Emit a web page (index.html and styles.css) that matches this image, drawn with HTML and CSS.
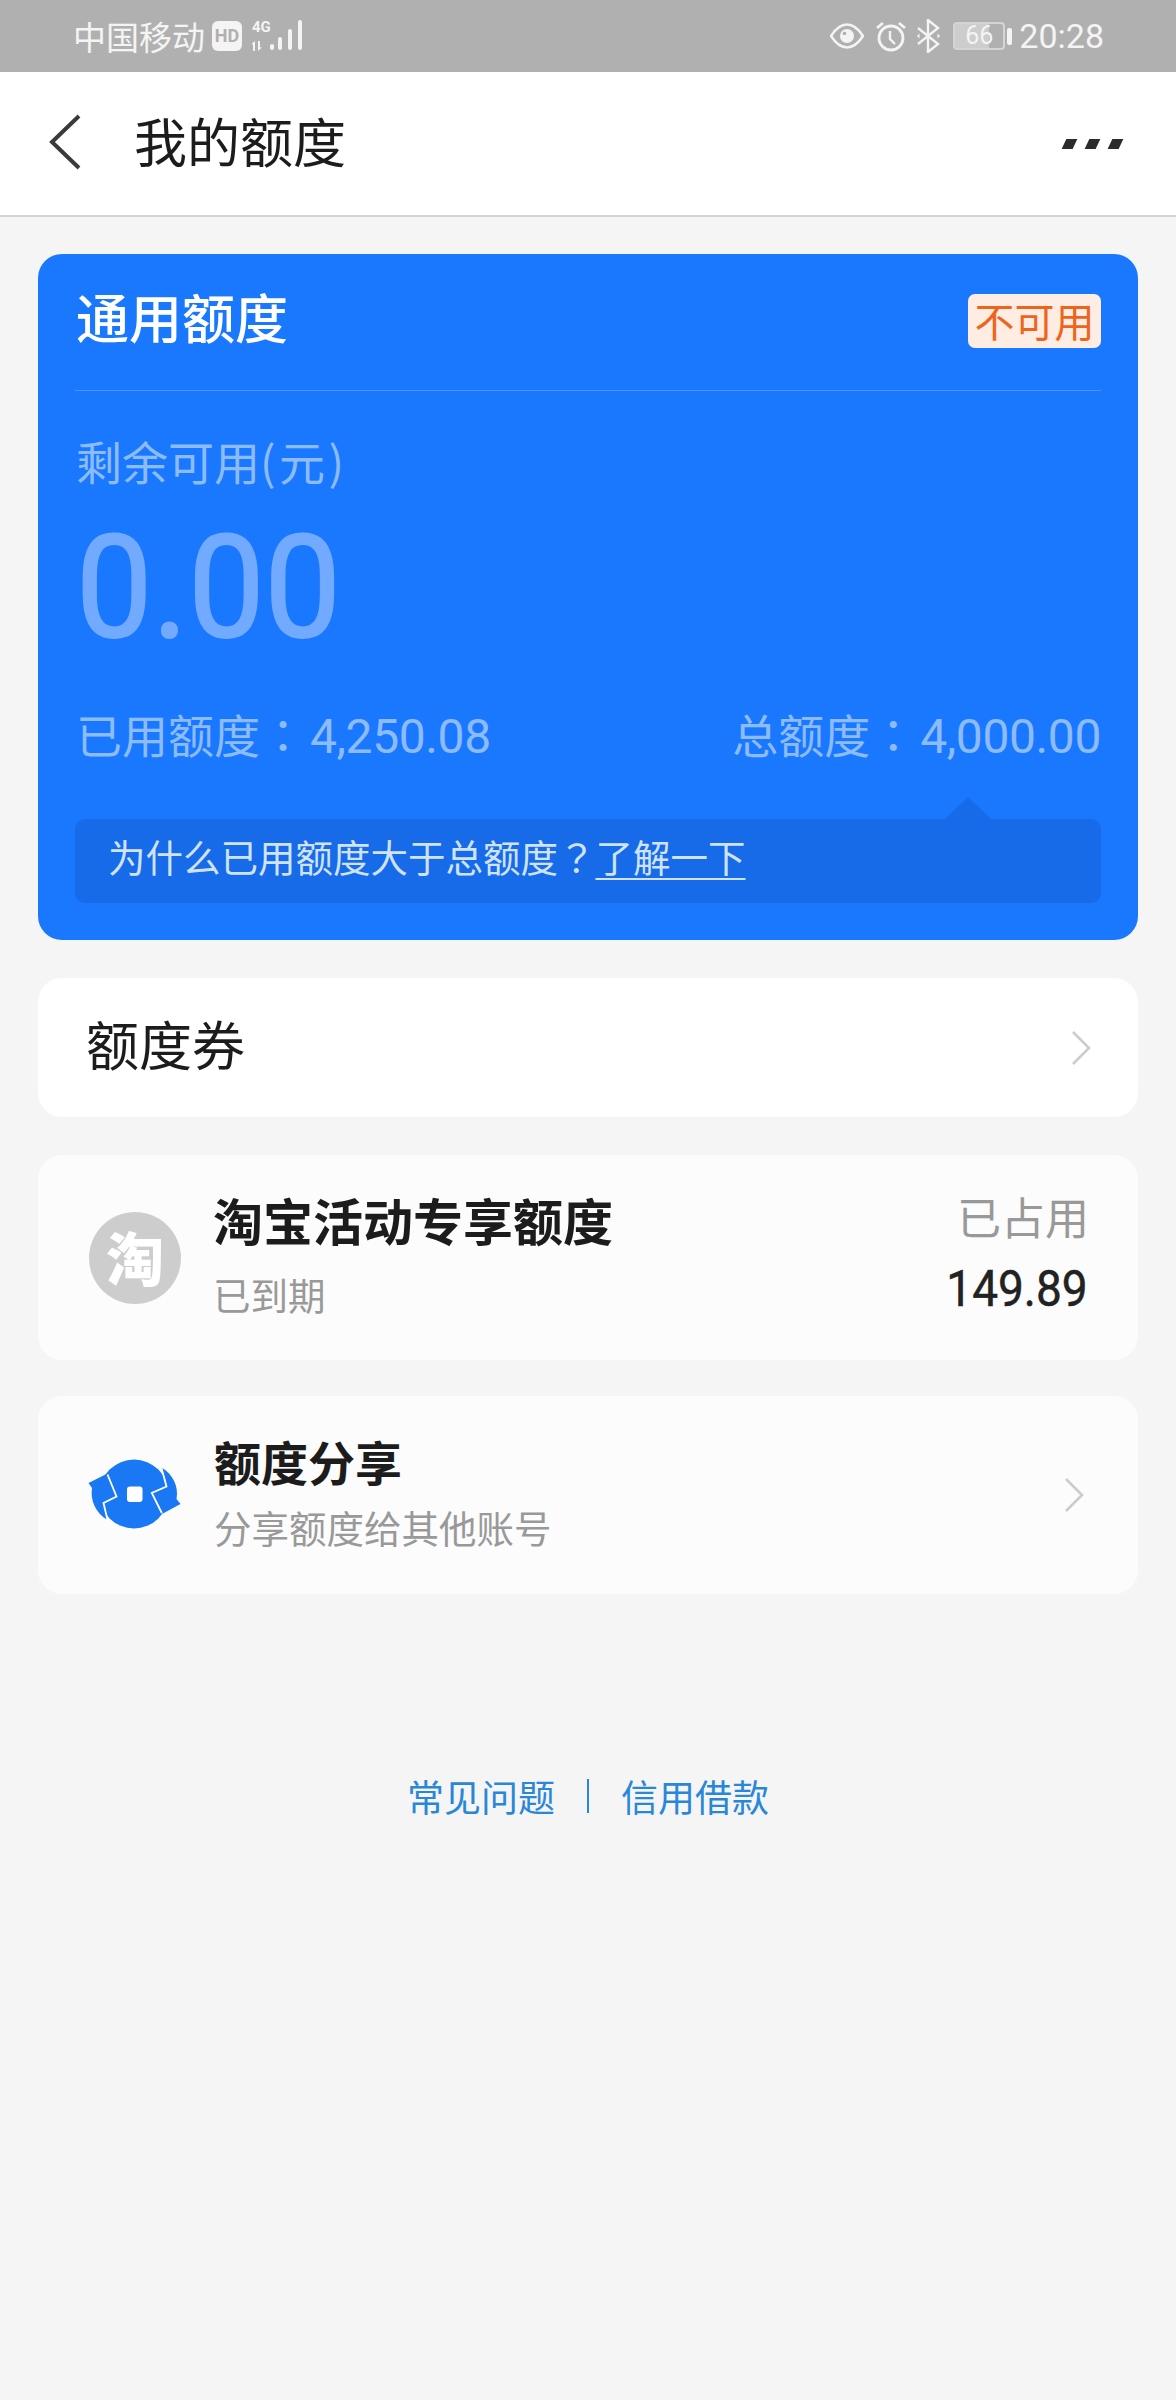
FILE: index.html
```html
<!DOCTYPE html>
<html lang="zh-CN">
<head>
  <meta charset="UTF-8">
  <title>我的额度</title>
  <link rel="stylesheet" href="styles.css">
</head>
<body>

  <!-- Status bar -->
  <div class="status">
    <div class="status-left">
      <span class="carrier">中国移动</span>
      <span class="hd">HD</span>
      <span class="net">
        <span class="net-g">4G</span>
        <svg width="14" height="10" viewBox="0 0 14 10">
          <path d="M0 2.500L3 0v10H1V3.500H0zM6 0h2v6.500h2L6 10z"/>
        </svg>
      </span>
      <svg class="signal" width="34" height="32" viewBox="0 0 34 32">
        <rect x="1" y="24" width="4" height="6" rx="2"/>
        <rect x="9" y="17" width="4" height="13" rx="2"/>
        <rect x="19" y="9" width="4" height="21" rx="2"/>
        <rect x="29" y="0" width="4" height="30" rx="2"/>
      </svg>
    </div>
    <div class="status-right">
      <svg class="ic-eye" width="34" height="26" viewBox="0 0 34 26">
        <path d="M1 13C6 5 11 1.500 17 1.500S28 5 33 13c-5 8-10 11.500-16 11.500S6 21 1 13z" fill="none" stroke="#f4f4f4" stroke-width="2.600"/>
        <circle cx="17" cy="13" r="7"/>
        <circle cx="14.500" cy="10.500" r="1.800" fill="#b0b0b0"/>
      </svg>
      <svg class="ic-alarm" width="32" height="32" viewBox="0 0 32 32">
        <circle cx="16" cy="18" r="12" fill="none" stroke="#f4f4f4" stroke-width="2.800"/>
        <path d="M15 11v8l5 5" fill="none" stroke="#f4f4f4" stroke-width="2.400"/>
        <path d="M2 8l6-5M30 8l-6-5" fill="none" stroke="#f4f4f4" stroke-width="2.800"/>
      </svg>
      <svg class="ic-bt" width="26" height="34" viewBox="0 0 26 34">
        <path d="M3 9l20 16-10 8V1l10 8L3 25" fill="none" stroke="#f4f4f4" stroke-width="2.400"/>
        <path d="M2 17l2.500-2.500v5zM25 17l-2.500-2.500v5z"/>
      </svg>
      <span class="battery"><span class="battery-fill"></span><span class="battery-num">66</span></span>
      <span class="battery-tip"></span>
      <span class="clock">20:28</span>
    </div>
  </div>

  <!-- Title bar -->
  <div class="topbar">
    <svg class="back" width="34" height="56" viewBox="0 0 34 56">
      <path d="M31 2L4 28l27 26" fill="none" stroke="#3a3a3a" stroke-width="4"/>
    </svg>
    <h1 class="page-title">我的额度</h1>
    <div class="more"><i></i><i></i><i></i></div>
  </div>

  <div class="content">

    <!-- Main quota card -->
    <div class="quota">
      <div class="quota-head">
        <span class="quota-title">通用额度</span>
        <span class="badge">不可用</span>
      </div>
      <div class="quota-label">剩余可用<span class="unit">(元)</span></div>
      <div class="quota-amount">0.00</div>
      <div class="quota-stats">
        <span>已用额度<span class="punct" lang="zh-TW">：</span><span class="num">4,250.08</span></span>
        <span>总额度<span class="punct" lang="zh-TW">：</span><span class="num">4,000.00</span></span>
      </div>
      <div class="tip">为什么已用额度大于总额度<span class="punct" lang="zh-TW">？</span><a class="tip-link">了解一下</a></div>
    </div>

    <!-- Coupon row -->
    <div class="card coupon">
      <span class="coupon-name">额度券</span>
      <svg class="chevron" width="22" height="36" viewBox="0 0 22 36"><path d="M3 2l16 16L3 34" fill="none" stroke="#cccccc" stroke-width="2.600"/></svg>
    </div>

    <!-- Taobao row -->
    <div class="card item taobao">
      <span class="tb-icon">淘</span>
      <div class="item-text">
        <div class="item-title">淘宝活动专享额度</div>
        <div class="item-sub">已到期</div>
      </div>
      <div class="used">
        <div class="used-label">已占用</div>
        <div class="used-num">149.89</div>
      </div>
    </div>

    <!-- Share row -->
    <div class="card item share">
      <svg class="share-icon" width="94" height="72" viewBox="0 0 94 72">
        <circle cx="46" cy="35" r="34.500" fill="#1a78f5"/>
        <path d="M.5 24L19.500 14.500 29 37l-13 7 3.500 17C8 54 2 42 4 29z" fill="#1a78f5"/>
        <path d="M92.500 45L75 54.500 64 34l15-7-5.500-18.500C85 15 91 28 88.500 40z" fill="#1a78f5"/>
        <path d="M19.500 15.500L28.500 37.500 15.500 44l4 17" fill="none" stroke="#fff" stroke-width="1.800"/>
        <path d="M73.500 9L78.500 27.500 63.800 34l10 20" fill="none" stroke="#fff" stroke-width="1.800"/>
        <rect x="39" y="27.500" width="15.500" height="15.500" rx="3" fill="#fff"/>
      </svg>
      <div class="item-text">
        <div class="item-title share-title">额度分享</div>
        <div class="item-sub share-sub">分享额度给其他账号</div>
      </div>
      <svg class="chevron" width="22" height="36" viewBox="0 0 22 36"><path d="M3 2l16 16L3 34" fill="none" stroke="#cccccc" stroke-width="2.600"/></svg>
    </div>

    <!-- Footer links -->
    <div class="links">
      <a>常见问题</a>
      <span class="links-sep"></span>
      <a>信用借款</a>
    </div>

  </div>
</body>
</html>
```

FILE: styles.css
```css
/* Reset + base */
* { margin:0; padding:0; box-sizing:border-box; }
body {
  width:1176px; height:2400px; overflow:hidden;
  background:#f5f5f5;
  font-family:"Noto Sans CJK SC", "Noto Sans", sans-serif;
}

/* Status bar */
.status {
  height:72px; background:#b0b0b0; color:#f4f4f4;
  display:flex; justify-content:space-between; align-items:center;
  padding:0 72px 0 73px;
}
.status-left, .status-right { display:flex; align-items:center; }
.status svg { fill:#f4f4f4; }
.carrier { font-size:33px; line-height:40px; }
.hd {
  width:30px; height:30px; margin-left:7px;
  background:#f4f4f4; color:#b0b0b0; border-radius:6px;
  font:bold 18px/30px "Roboto", sans-serif; text-align:center;
}
.net {
  width:19px; margin-left:10px;
  display:flex; flex-direction:column; align-items:flex-start; gap:8px;
}
.net-g { font:bold 15px/12px "Roboto", sans-serif; }
.signal { margin:0 0 0 -2px; }
.ic-eye { margin-right:11px; }
.ic-alarm { margin-right:8px; }
.ic-bt { margin-right:12px; }
.battery {
  position:relative; width:52px; height:28px;
  border:2px solid #d4d4d4; border-radius:4px;
}
.battery-fill { position:absolute; left:0; top:0; bottom:0; width:34px; background:#cdcdcd; }
.battery-num {
  position:relative; display:block; text-align:center;
  font:25px/24px "Roboto", sans-serif;
}
.battery-tip { width:5px; height:17px; margin-left:2px; background:#f4f4f4; border-radius:2px; }
.clock { font:34px/40px "Roboto", sans-serif; margin-left:7px; }

/* Title bar */
.topbar {
  height:145px; background:#fff;
  border-bottom:2px solid #d4d4d4;
  display:flex; align-items:center;
  padding:0 55px 4px 48px;
}
.back { margin-right:52px; }
.page-title { font-size:53px; line-height:60px; font-weight:400; color:#1c1c1c; flex:1; margin-bottom:4px; }
.more { display:flex; gap:12px; margin-top:4px; }
.more i { width:11px; height:10px; background:#2c2c2c; transform:skewX(-25deg); }

/* Page body */
.content { padding:37px 38px 0; }

/* Main quota card */
.quota {
  height:686px; background:#1a78ff; border-radius:24px;
  padding:0 37px;
  color:#8cbcff;
}
.quota-head {
  height:137px; border-bottom:1px solid #4f95ff;
  display:flex; justify-content:space-between;
}
.quota-title { font-size:53px; line-height:60px; font-weight:500; color:#fff; margin:32px 0 0 1px; }
.badge {
  width:133px; height:54px; margin-top:40px;
  background:#ffede4; color:#ee641c; border-radius:7px;
  font-size:40px; line-height:52px; text-align:center;
}
.quota-label { font-size:46px; line-height:52px; margin:43px 0 0 1px; }
.unit { letter-spacing:3.500px; }
/* Roboto digits are wider than the ones on the phone, so squeeze them a bit */
.quota-amount {
  font:400 143px/143px "Roboto", sans-serif;
  -webkit-text-stroke:2px #72aaff;
  color:#72aaff;
  margin:31px 0 0 1px;
  transform:scaleX(.95); transform-origin:left center;
}
.quota-stats {
  display:flex; justify-content:space-between;
  font-size:46px; line-height:52px;
  margin:47px 0 0 1px;
}
.num { font:48px/52px "Roboto", sans-serif; letter-spacing:-.4px; margin-left:4px; }
.punct { font-family:"Noto Sans CJK TC", sans-serif; }
.tip {
  position:relative;
  height:84px; margin-top:56px; padding-left:33px;
  background:#176ae8; border-radius:10px;
  font-size:37.500px; line-height:74px; color:#cfe3ff;
}
.tip::before {
  content:""; position:absolute; right:110px; top:-22px;
  border-left:23px solid transparent; border-right:23px solid transparent;
  border-bottom:22px solid #176ae8;
}
.tip-link { text-decoration:underline; text-decoration-thickness:2px; text-underline-offset:6px; }

/* Row cards */
.card { background:#fff; border-radius:24px; display:flex; align-items:center; }
.coupon {
  height:139px; margin-top:38px;
  padding:0 46px 9px 48px;
  justify-content:space-between;
}
.coupon .chevron { margin-top:9px; }
.coupon-name { font-size:53px; line-height:60px; color:#1c1c1c; }

.item { background:#fcfcfc; }
.taobao { height:205px; margin-top:38px; padding:0 50px 0 51px; }
.share { height:198px; margin-top:36px; padding:0 53px 0 50px; }
.item-text { flex:1; margin:0 0 10px 32px; }
.item-title { font-size:50px; line-height:58px; font-weight:700; color:#1c1c1c; }
.item-sub { font-size:37.500px; line-height:44px; color:#999; margin-top:24px; }
.share-title { font-size:47px; }
.share-sub { margin-top:15px; }

.tb-icon {
  width:92px; height:92px; border-radius:50%;
  background:#cdcdcd; color:#fff;
  font-size:58px; line-height:88px; font-weight:900; text-align:center;
}
.used { text-align:right; margin:0 0 8px 0; }
.used-label { font-size:44px; line-height:50px; color:#999; margin-right:-1px; }
.used-num {
  font:400 50px/56px "Roboto", sans-serif; color:#222;
  -webkit-text-stroke:.5px #222;
  margin-top:20px;
  transform:scaleX(.92); transform-origin:right center;
}

/* Footer links */
.links {
  display:flex; justify-content:center; align-items:center;
  margin-top:172px;
  font-size:37px; line-height:60px; color:#2a87d8;
}
.links-sep { width:2px; height:34px; background:#2a87d8; margin:0 32px; }
```
